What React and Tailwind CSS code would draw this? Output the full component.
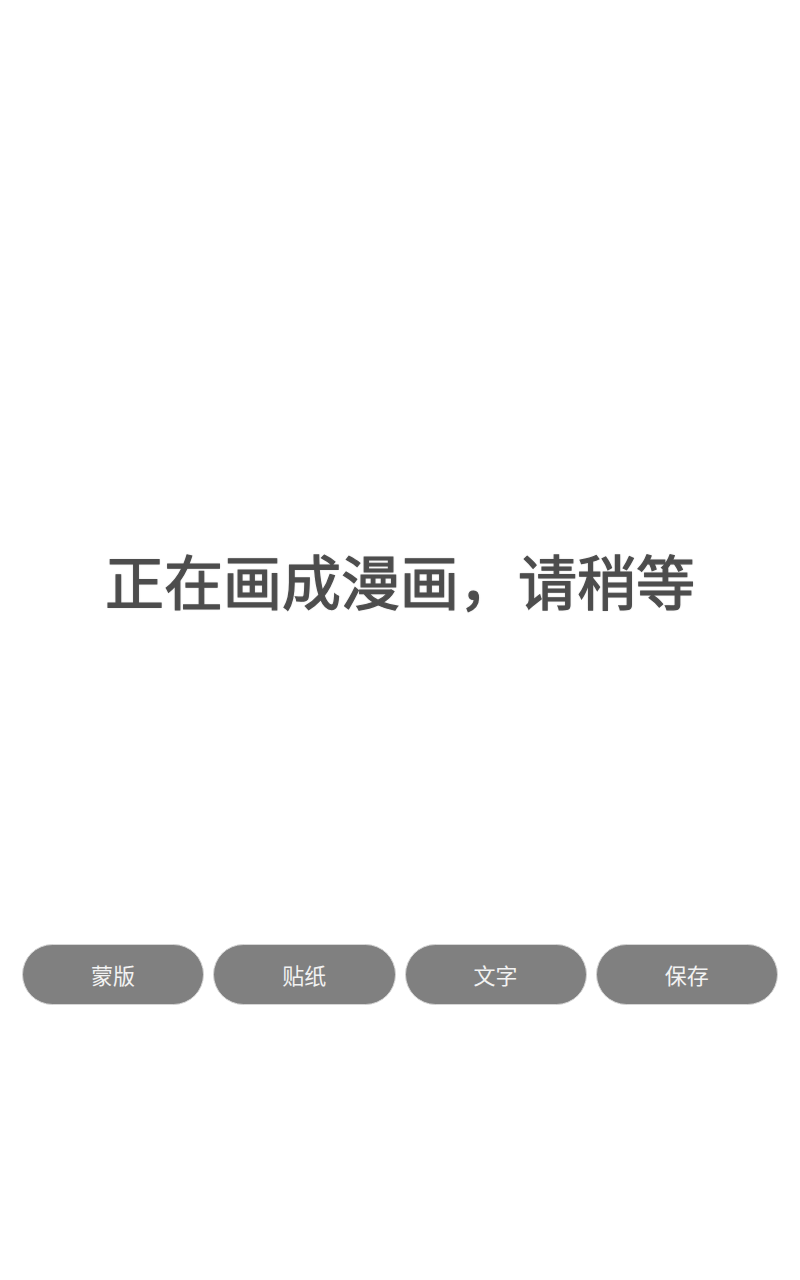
import React from "react";

const tools = ["蒙版", "贴纸", "文字", "保存"];

export default function App() {
  return (
    <div
      className="h-[1280px] w-[800px] bg-white"
      style={{ fontFamily: '"Noto Sans CJK SC", "Noto Sans", sans-serif' }}
    >
      <div className="pt-[550px] flex justify-center">
        <h1 className="text-[59px] leading-none font-normal text-[#4d4d4d] [-webkit-text-stroke:1.2px_#4d4d4d] [text-shadow:0_0_2px_rgba(0,0,0,0.35)]">
          正在画成漫画，请稍等
        </h1>
      </div>
      <div className="mt-[335px] px-[22px] flex gap-[9px]">
        {tools.map((t) => (
          <button
            key={t}
            className="flex-1 h-[61px] rounded-full bg-[#808080] border border-[#d6d6d6] text-[22px] text-[#f2f2f2] flex items-center justify-center"
          >
            {t}
          </button>
        ))}
      </div>
    </div>
  );
}
